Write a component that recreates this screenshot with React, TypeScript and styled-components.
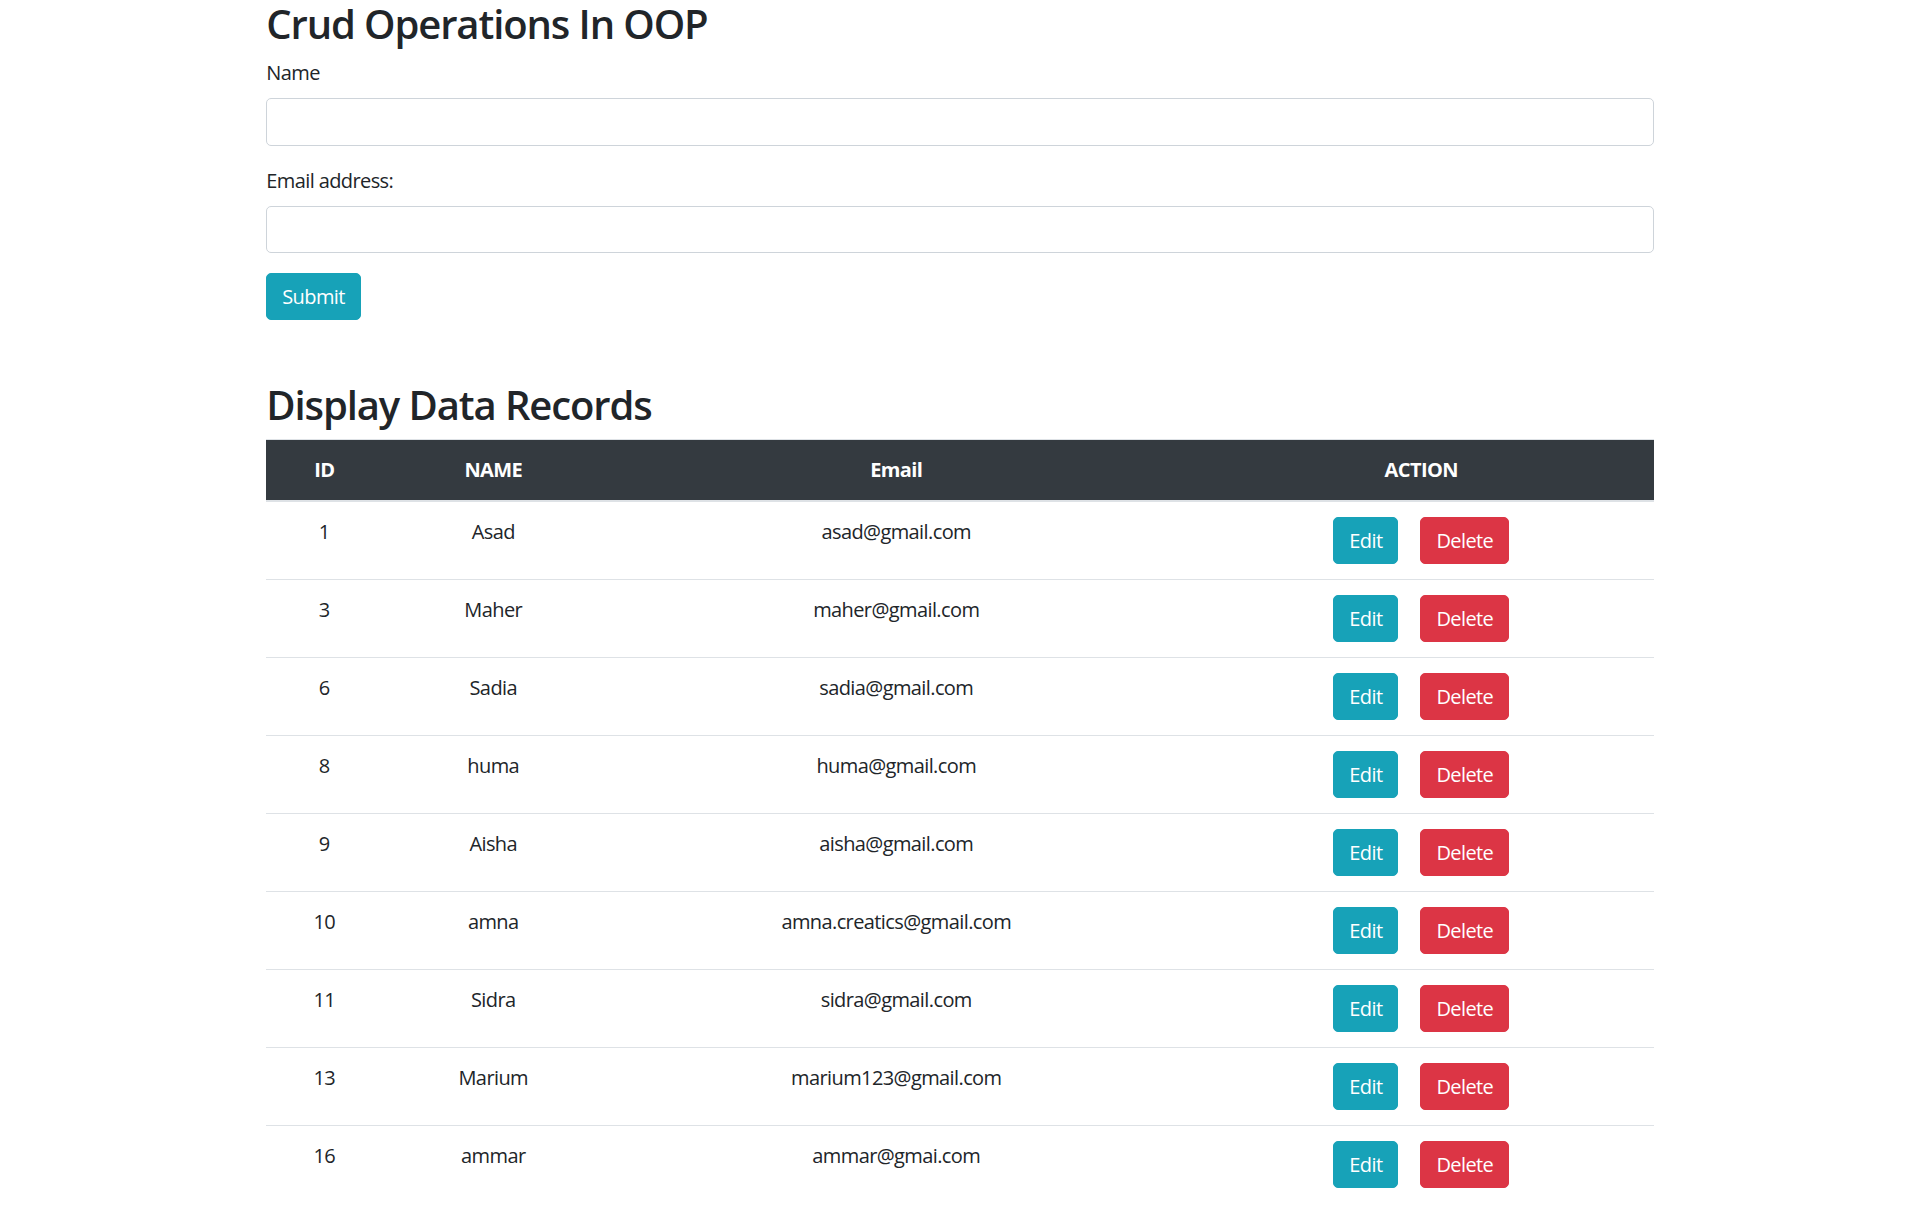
import React from "react";
import styled, { createGlobalStyle } from "styled-components";

const Global = createGlobalStyle`
  html, body { margin: 0; padding: 0; background: #fff; }
  body {
    font-family: "Open Sans", "Noto Sans", sans-serif;
    font-size: 20px;
    line-height: 1.5;
    letter-spacing: -0.6px;
    color: #212529;
  }
  * { box-sizing: border-box; }
`;

const Container = styled.div`
  width: 1387.5px;
  margin: 0 auto;
`;

const Heading = styled.h2<{ $top?: number }>`
  font-size: 40px;
  font-weight: 600;
  letter-spacing: -1.1px;
  line-height: 1.2;
  margin: ${(p) => p.$top ?? 0}px 0 10px;
`;

const FormGroup = styled.div`
  margin-bottom: 20px;
`;

const Label = styled.label`
  display: inline-block;
  margin-bottom: 10px;
`;

const Input = styled.input`
  display: block;
  width: 100%;
  height: 47.5px;
  padding: 7.5px 15px;
  font: inherit;
  color: #495057;
  background: #fff;
  border: 1px solid #ced4da;
  border-radius: 5px;
  outline: none;
`;

const Button = styled.button<{ $variant: "info" | "danger" }>`
  display: inline-block;
  font: inherit;
  font-size: 20px;
  line-height: 30px;
  letter-spacing: -0.6px;
  padding: 7.5px 15px;
  color: #fff;
  border: 1px solid ${(p) => (p.$variant === "info" ? "#17a2b8" : "#dc3545")};
  background: ${(p) => (p.$variant === "info" ? "#17a2b8" : "#dc3545")};
  border-radius: 5px;
  cursor: pointer;
`;

const Table = styled.table`
  width: 100%;
  margin-top: 0;
  margin-bottom: 20px;
  border-collapse: collapse;
  table-layout: fixed;
  text-align: center;
`;

const Col = styled.col<{ $w: number }>`
  width: ${(p) => p.$w}px;
`;

const Th = styled.th`
  padding: 15px;
  font-weight: 700;
  color: #fff;
  background: #343a40;
  border-top: 1px solid #dee2e6;
  border-bottom: 2px solid #dee2e6;
  vertical-align: bottom;
`;

const Td = styled.td`
  padding: 15px;
  vertical-align: top;
  border-top: 1px solid #dee2e6;
`;

const Actions = styled.div`
  display: inline-flex;
  gap: 22px;
`;

const rows = [
  [1, "Asad", "asad@gmail.com"],
  [3, "Maher", "maher@gmail.com"],
  [6, "Sadia", "sadia@gmail.com"],
  [8, "huma", "huma@gmail.com"],
  [9, "Aisha", "aisha@gmail.com"],
  [10, "amna", "amna.creatics@gmail.com"],
  [11, "Sidra", "sidra@gmail.com"],
  [13, "Marium", "marium123@gmail.com"],
  [16, "ammar", "ammar@gmai.com"],
] as const;

export default function App() {
  return (
    <>
      <Global />
      <Container>
        <Heading>Crud Operations In OOP</Heading>
        <form onSubmit={(e) => e.preventDefault()}>
          <FormGroup>
            <Label htmlFor="name">Name</Label>
            <Input id="name" type="text" />
          </FormGroup>
          <FormGroup>
            <Label htmlFor="email">Email address:</Label>
            <Input id="email" type="email" />
          </FormGroup>
          <Button $variant="info" type="submit">Submit</Button>
        </form>
        <Heading $top={61}>Display Data Records</Heading>
        <Table>
          <colgroup>
            <Col $w={116} />
            <Col $w={222} />
            <Col $w={584} />
            <Col $w={466} />
          </colgroup>
          <thead>
            <tr>
              <Th>ID</Th>
              <Th>NAME</Th>
              <Th>Email</Th>
              <Th>ACTION</Th>
            </tr>
          </thead>
          <tbody>
            {rows.map(([id, name, email]) => (
              <tr key={id}>
                <Td>{id}</Td>
                <Td>{name}</Td>
                <Td>{email}</Td>
                <Td>
                  <Actions>
                    <Button $variant="info">Edit</Button>
                    <Button $variant="danger">Delete</Button>
                  </Actions>
                </Td>
              </tr>
            ))}
          </tbody>
        </Table>
      </Container>
    </>
  );
}
